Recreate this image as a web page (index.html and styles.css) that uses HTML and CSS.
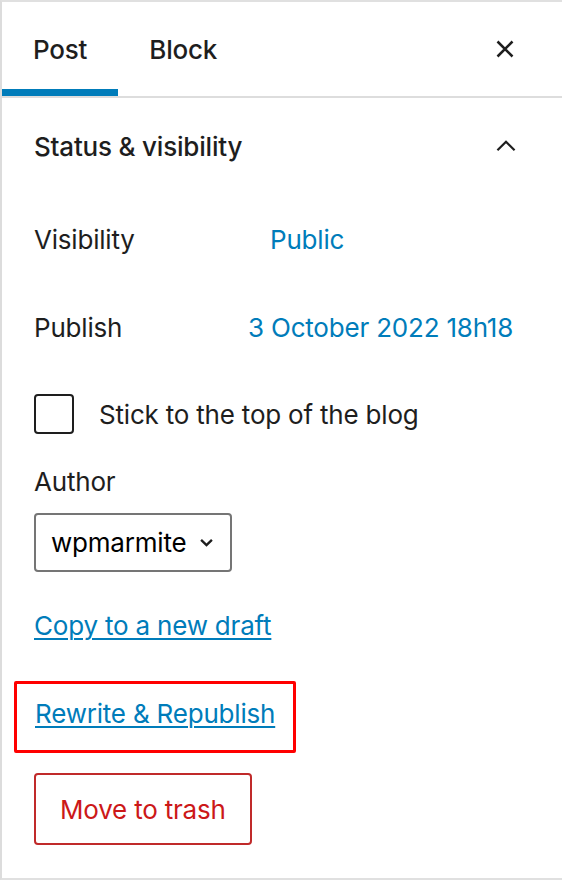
FILE: index.html
```html
<!DOCTYPE html>
<html lang="en">
<head>
  <meta charset="UTF-8">
  <meta name="viewport" content="width=device-width, initial-scale=1.0">
  <title>Post settings</title>
  <link rel="stylesheet" href="styles.css">
</head>
<body>
  <div class="sidebar">
    <div class="tabs">
      <button class="tab active">Post</button>
      <button class="tab">Block</button>
      <button class="close" aria-label="Close settings">
        <svg width="24" height="24" viewBox="0 0 24 24"><path d="M3 3L21 21M21 3L3 21" /></svg>
      </button>
    </div>

    <div class="panel">
      <div class="panel-title">
        <span>Status &amp; visibility</span>
        <svg class="chevron-up" width="24" height="14" viewBox="0 0 24 14"><path d="M2 12L12 2L22 12" /></svg>
      </div>

      <div class="row row-visibility">
        <span class="label">Visibility</span>
        <a href="#" class="value value-public">Public</a>
      </div>

      <div class="row row-publish">
        <span class="label">Publish</span>
        <a href="#" class="value">3 October 2022 18h18</a>
      </div>

      <label class="row row-sticky">
        <span class="checkbox"></span>
        <span>Stick to the top of the blog</span>
      </label>

      <div class="author">
        <div class="label">Author</div>
        <div class="select">
          <span>wpmarmite</span>
          <svg width="16" height="10" viewBox="0 0 16 10"><path d="M2 2L8 8L14 2" /></svg>
        </div>
      </div>

      <div class="link-row">
        <a href="#" class="link">Copy to a new draft</a>
      </div>

      <div class="highlight">
        <a href="#" class="link">Rewrite &amp; Republish</a>
      </div>

      <button class="trash">Move to trash</button>
    </div>
  </div>
</body>
</html>
```

FILE: styles.css
```css
body {
  margin: 0;
  background: #fff;
  font-family: 'Inter', 'Noto Sans', sans-serif;
  color: #1e1e1e;
  letter-spacing: -0.2px;
}

.sidebar {
  width: 560px;
  height: 876px;
  border-left: 2px solid #dcdcdc;
  border-top: 2px solid #e0e0e0;
  border-bottom: 2px solid #e0e0e0;
  box-sizing: content-box;
  overflow: hidden;
}

/* header tabs */
.tabs {
  display: flex;
  align-items: stretch;
  height: 94px;
  border-bottom: 2px solid #dddddd;
}

.tab {
  background: none;
  border: none;
  padding: 0 31px;
  font-family: inherit;
  font-size: 26px;
  font-weight: 500;
  letter-spacing: inherit;
  color: #1e1e1e;
  box-shadow: none;
}

.tab.active {
  box-shadow: inset 0 -7px 0 #007cba;
}

.close {
  margin-left: auto;
  margin-right: 47px;
  background: none;
  border: none;
  padding: 0;
  display: flex;
  align-items: center;
}

.close svg {
  width: 20px;
  height: 20px;
}

.close path,
.chevron-up path,
.select path {
  fill: none;
  stroke: #1e1e1e;
  stroke-width: 2.6;
}

.close path {
  stroke-width: 3;
}

/* panel */
.panel {
  padding: 0 0 0 32px;
}

.panel-title {
  display: flex;
  align-items: center;
  justify-content: space-between;
  height: 96px;
  padding-right: 45px;
  font-size: 26px;
  font-weight: 500;
}

.chevron-up {
  width: 22px;
  height: 12px;
}

.row {
  display: flex;
  align-items: center;
  height: 56px;
  font-size: 26px;
}

.row-visibility {
  margin-top: 17px;
}

.row-publish {
  margin-top: 32px;
}

.row-sticky {
  margin-top: 31px;
}

.label {
  font-size: 26px;
}

.row .label {
  width: 214px;
}

.value {
  color: #007cba;
  text-decoration: none;
}

.value-public {
  margin-left: 22px;
}

.checkbox {
  width: 36px;
  height: 36px;
  border: 2px solid #1e1e1e;
  border-radius: 4px;
  margin-right: 25px;
}

.author {
  margin-top: 22px;
}

.author .label {
  line-height: 36px;
}

.select {
  display: inline-flex;
  align-items: center;
  gap: 13px;
  margin-top: 13px;
  height: 55px;
  padding: 0 16px 0 15px;
  border: 2px solid #757575;
  border-radius: 4px;
  font-size: 26px;
  color: #000;
}

.select svg {
  width: 15px;
  height: 9px;
}

.link-row {
  margin-top: 36px;
  line-height: 36px;
}

.link {
  font-size: 26px;
  color: #007cba;
  text-decoration: underline;
  text-underline-offset: 3px;
  text-decoration-thickness: 2px;
}

.highlight {
  display: inline-block;
  margin: 34px 0 0 -20px;
  padding: 12px 18px 15px 18px;
  line-height: 36px;
  border: 3px solid #ff0000;
  border-radius: 2px;
}

.trash {
  display: block;
  margin-top: 20px;
  height: 72px;
  padding: 0 24px;
  background: #fff;
  border: 2px solid #c02a2a;
  border-radius: 4px;
  font-family: inherit;
  font-size: 26px;
  letter-spacing: inherit;
  color: #cc1818;
}
```
